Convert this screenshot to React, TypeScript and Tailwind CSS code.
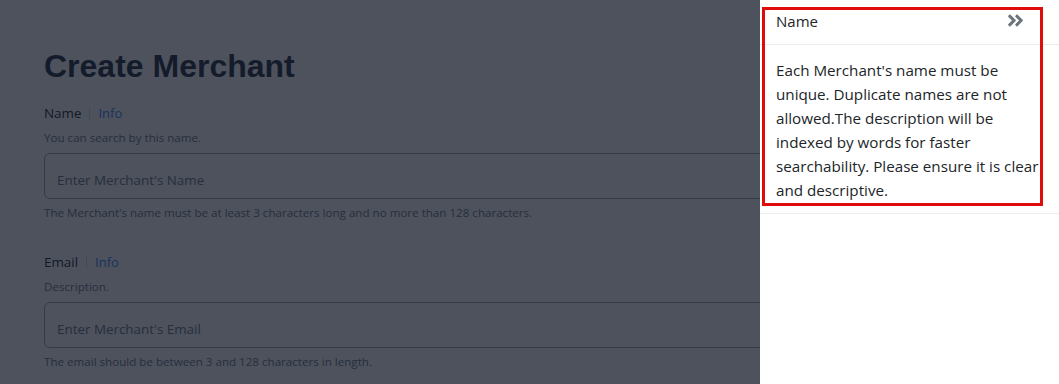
import { FaAngleDoubleRight } from "react-icons/fa";

function Field({
  label,
  description,
  placeholder,
  helper,
}: {
  label: string;
  description: string;
  placeholder: string;
  helper: string;
}) {
  return (
    <div className="flex flex-col">
      <div className="flex items-center gap-2 h-5 mb-[7px]">
        <span className="text-[13.4px] leading-5 text-gray-900">{label}</span>
        <span className="w-px h-3 bg-gray-300" />
        <span className="text-[13px] leading-5 text-blue-500">Info</span>
      </div>
      <p className="text-[11.6px] leading-4 text-gray-500 mb-[7px]">{description}</p>
      <div className="w-[980px] h-[46px] border border-gray-400 rounded-md px-3 pt-4 pb-2">
        <span className="block text-[13.4px] leading-5 text-gray-500">{placeholder}</span>
      </div>
      <p className="text-[11.6px] leading-4 text-gray-500 mt-[6px]">{helper}</p>
    </div>
  );
}

export default function App() {
  return (
    <div className="relative w-[1059px] h-[384px] overflow-hidden bg-white font-['Open_Sans',sans-serif]">
      <div className="pl-11 pt-[46px] flex flex-col">
        <h1 className="font-['Liberation_Sans',Arial,sans-serif] font-bold text-[32px] leading-[40px] text-gray-800 mb-[17px]">
          Create Merchant
        </h1>
        <div className="flex flex-col gap-[31px]">
          <Field
            label="Name"
            description="You can search by this name."
            placeholder="Enter Merchant's Name"
            helper="The Merchant's name must be at least 3 characters long and no more than 128 characters."
          />
          <Field
            label="Email"
            description="Description."
            placeholder="Enter Merchant's Email"
            helper="The email should be between 3 and 128 characters in length."
          />
        </div>
      </div>

      {/* backdrop */}
      <div className="absolute inset-0 bg-[rgba(17,24,39,0.75)]" />

      {/* side drawer */}
      <aside className="absolute top-0 right-0 bottom-0 w-[299px] bg-white text-[#212529]">
        <div className="flex items-start justify-between h-[45px] border-b border-[#ececec] pl-4 pr-[34px] pt-[9px]">
          <span className="text-[15px] leading-6">Name</span>
          <FaAngleDoubleRight size={19} className="text-[#6c757d] mt-[2px]" />
        </div>
        <div className="border-b border-[#ececec] pl-4 pr-3 pt-[13px] pb-[11px]">
          <p className="text-[15.2px] leading-6 w-[266px]">
            Each Merchant's name must be unique. Duplicate names are not allowed.The description will be indexed by words for faster searchability. Please ensure it is clear and descriptive.
          </p>
        </div>
        <div className="absolute left-[2px] top-[7px] w-[281px] h-[199px] border-[3px] border-[#e00b0b]" />
      </aside>
    </div>
  );
}
